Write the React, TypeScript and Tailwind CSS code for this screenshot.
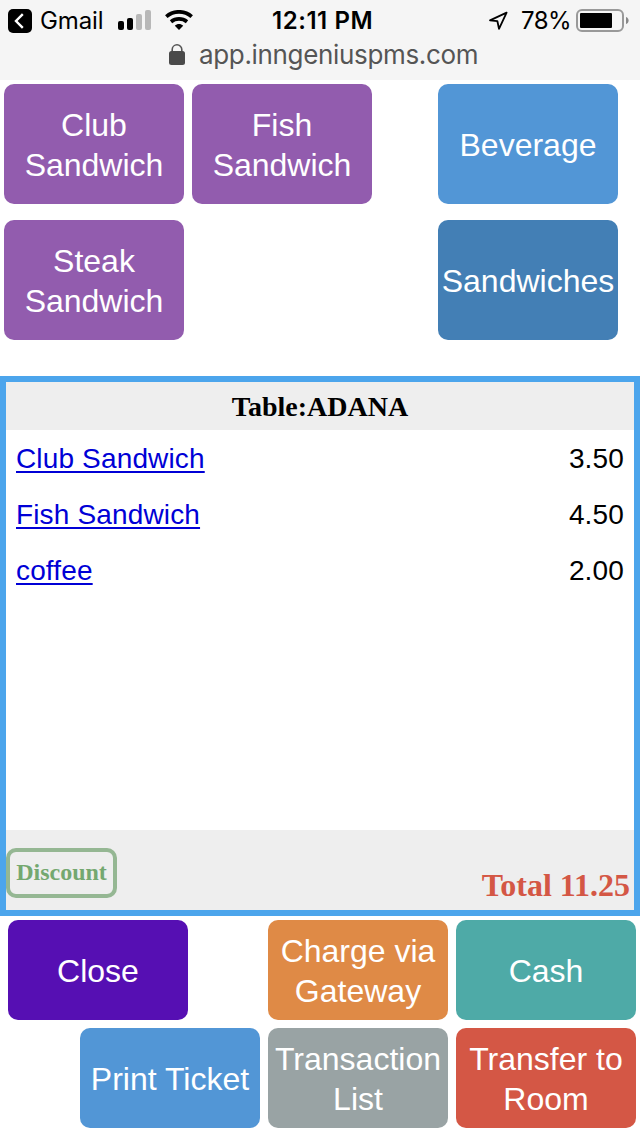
import type { ReactNode } from "react";

const items = [
  { name: "Club Sandwich", price: "3.50" },
  { name: "Fish Sandwich", price: "4.50" },
  { name: "coffee", price: "2.00" },
];

function Tile({ className, children }: { className: string; children: ReactNode }) {
  return <button className={`flex w-[180px] shrink-0 items-center justify-center rounded-[10px] text-center text-[32px] leading-10 text-white ${className}`}>
    <span className="relative top-px">{children}</span>
  </button>;
}

function StatusBar() {
  return <header className="h-20 bg-[#f5f5f5] font-['Inter',sans-serif]">
    <div className="flex h-10 items-center pt-[2px] pl-2 text-2xl leading-[38px] text-black">
      <svg width="24" height="24" viewBox="0 0 24 24" className="shrink-0">
        <rect width="24" height="24" rx="5" />
        <path d="M14.8 5.2 8 12l6.8 6.8" fill="none" stroke="#fff" strokeWidth="2.4" />
      </svg>
      <span className="ml-2 w-[78px] whitespace-nowrap tracking-[-0.1px]">Gmail</span>
      <svg width="34" height="20" viewBox="0 0 34 20" className="-mt-[2px] shrink-0">
        <rect x="0" y="11" width="6" height="9" rx="2" />
        <rect x="9" y="8" width="6" height="12" rx="2" />
        <rect x="18" y="4" width="6" height="16" rx="2" fill="#b8b8b8" />
        <rect x="27" y="0" width="6" height="20" rx="2" fill="#b8b8b8" />
      </svg>
      <svg width="28" height="20" viewBox="0 0 28 20" className="-mt-[2px] ml-[13px] shrink-0">
        <path d="M1.3 6.6c7.2-6.4 18.2-6.4 25.4 0M6 11.7c4.7-3.8 11.3-3.8 16 0" fill="none" stroke="#000" strokeWidth="3.7" />
        <path d="m14 20-4.2-4.3c2.4-2.2 6-2.2 8.4 0z" />
      </svg>
      <span className="ml-[79px] w-[216px] whitespace-nowrap text-[24px] font-semibold tracking-[0.55px]">12:11 PM</span>
      <svg width="20" height="20" viewBox="0 0 20 20" className="shrink-0">
        <path d="M18.6 1.6 2 9.4l7.4.8 1.6 7.6z" fill="none" stroke="#000" strokeWidth="1.8" strokeLinejoin="round" />
      </svg>
      <span className="ml-[13px] w-[55px] whitespace-nowrap tracking-[-0.6px]">78%</span>
      <svg width="54" height="24" viewBox="0 0 54 24" className="-mt-px shrink-0">
        <rect x="1" y="1" width="46" height="21" rx="5" fill="none" stroke="#999" strokeWidth="2" />
        <rect x="4" y="4" width="32" height="15" rx="1" />
        <path d="M50 8c3.5 1 3.5 6 0 7z" fill="#888" />
      </svg>
    </div>
    <div className="flex h-8 items-center pl-[169px] text-[#555]">
      <svg width="16" height="21" viewBox="0 0 16 21" className="-mt-1 shrink-0">
        <path d="M3.2 9V5.6a4.8 4.8 0 0 1 9.6 0V9" fill="none" stroke="#555" strokeWidth="1.6" />
        <rect y="7" width="16" height="14" rx="2.5" fill="#4a4a4a" />
      </svg>
      <span className="-mt-[2px] ml-[14px] text-[26px] leading-8 tracking-[-0.34px]">app.inngeniuspms.com</span>
    </div>
  </header>;
}

export default function App() {
  return <div className="h-[1136px] w-[640px] overflow-hidden bg-white font-['Liberation_Sans',sans-serif]">
    <StatusBar />

    <main>
      <section className="flex h-[296px] items-start justify-between pt-1 pr-[22px] pl-1">
        <div className="flex w-[368px] flex-wrap gap-x-2 gap-y-4">
          <Tile className="h-[120px] bg-[#925cae]">Club<br />Sandwich</Tile>
          <Tile className="h-[120px] bg-[#925cae]">Fish<br />Sandwich</Tile>
          <Tile className="h-[120px] bg-[#925cae]">Steak<br />Sandwich</Tile>
        </div>
        <div className="flex flex-col gap-4">
          <Tile className="h-[120px] bg-[#5296d6]">Beverage</Tile>
          <Tile className="h-[120px] bg-[#437fb5]">Sandwiches</Tile>
        </div>
      </section>

      <section className="flex h-[540px] flex-col border-[6px] border-[#4ca5ec]">
        <h1 className="h-12 bg-[#eee] pt-px text-center font-['Liberation_Serif',serif] text-[28px] leading-[48px] font-bold text-black">Table:ADANA</h1>
        <ul className="grow">
          {items.map((item) => <li key={item.name} className="flex h-14 items-center justify-between pt-[2px] pr-[10px] pl-[10px] text-[28px] tracking-[0.15px]">
            <a href="#" className="text-[#0000d6] underline decoration-2 underline-offset-[3px]">{item.name}</a>
            <span className="text-black">{item.price}</span>
          </li>)}
        </ul>
        <div className="flex h-20 items-end justify-between bg-[#eee] pr-1 font-['Liberation_Serif',serif] font-bold">
          <button className="mb-3 h-[50px] w-[111px] rounded-[10px] border-4 border-[#95b793] pb-[2px] text-2xl text-[#74a870]">Discount</button>
          <span className="mb-[5px] text-[32px] leading-10 text-[#d45745]">Total 11.25</span>
        </div>
      </section>

      <section className="flex flex-col gap-2 px-1 pt-1">
        <div className="flex justify-end gap-2">
          <Tile className="mr-[72px] h-[100px] bg-[#560fb3]">Close</Tile>
          <Tile className="h-[100px] bg-[#df8a46]">Charge via<br />Gateway</Tile>
          <Tile className="h-[100px] bg-[#4eaaa7]">Cash</Tile>
        </div>
        <div className="flex justify-end gap-2">
          <Tile className="h-[100px] bg-[#5296d6]">Print Ticket</Tile>
          <Tile className="h-[100px] bg-[#99a3a4]">Transaction<br />List</Tile>
          <Tile className="h-[100px] bg-[#d45745]">Transfer to<br />Room</Tile>
        </div>
      </section>
    </main>
  </div>;
}
